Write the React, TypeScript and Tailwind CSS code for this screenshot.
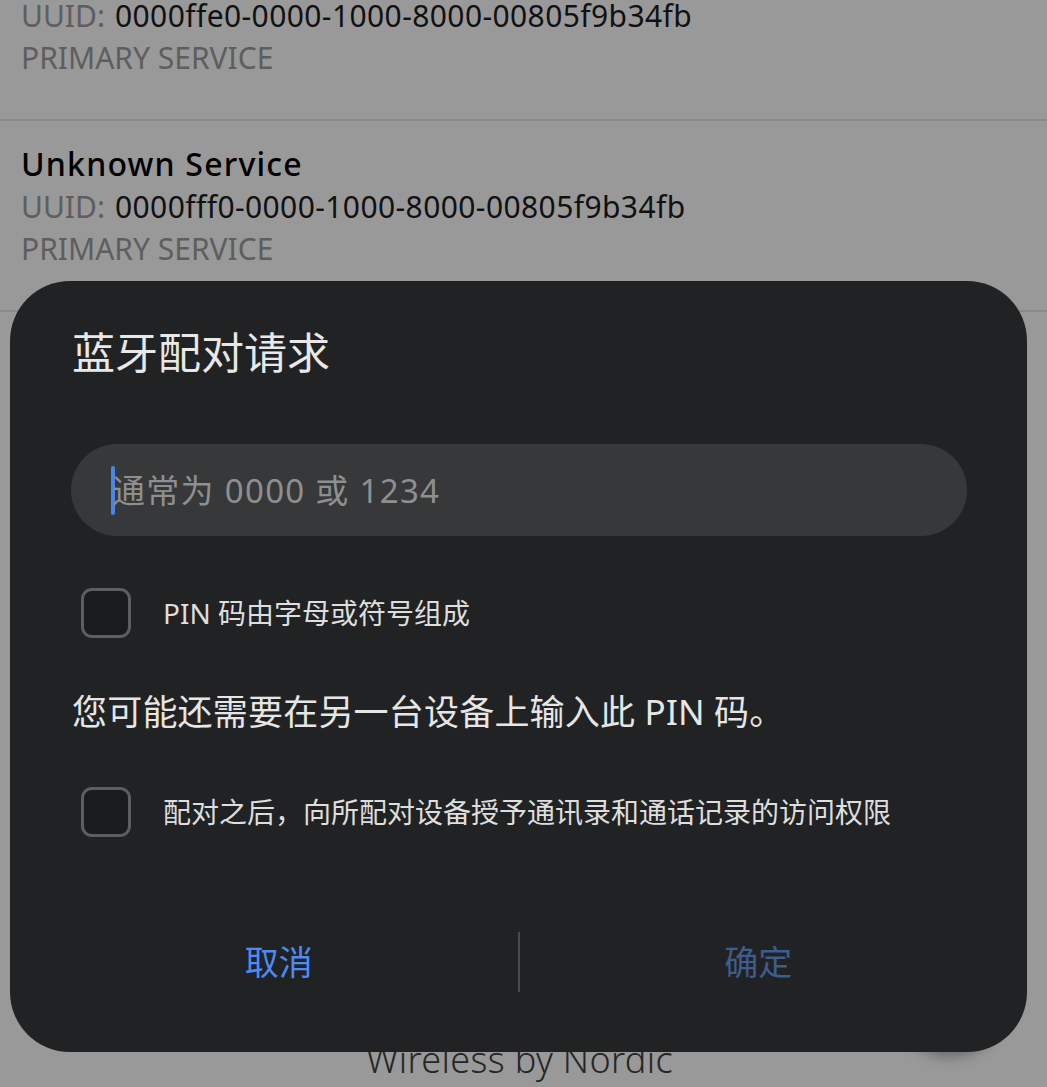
const font = { fontFamily: '"Noto Sans", "Noto Sans CJK SC", sans-serif' };

type Service = { name: string; uuid: string };

const services: Service[] = [
  { name: "Unknown Service", uuid: "0000ffe0-0000-1000-8000-00805f9b34fb" },
  { name: "Unknown Service", uuid: "0000fff0-0000-1000-8000-00805f9b34fb" },
];

const ServiceRow = ({ s }: { s: Service }) => (
  <div className="pl-[21px] pt-[21px] pb-[40px] border-b-2 border-[#8a8a8a]">
    <div className="text-[32px] leading-[44px] font-medium tracking-[1.2px] text-black">{s.name}</div>
    <div className="text-[30px] leading-[42px] flex gap-[10px]">
      <span className="text-[#5e5e5e]">UUID:</span>
      <span className="text-[#111] tracking-[0.4px]">{s.uuid}</span>
    </div>
    <div className="text-[30px] leading-[42px] text-[#5e5e5e]">PRIMARY SERVICE</div>
  </div>
);

const Check = ({ label }: { label: string }) => (
  <div className="flex items-center pl-[10px]">
    <div className="w-[50px] h-[50px] rounded-[11px] border-[3px] border-[#5d5e60] bg-[#1a1b1d] shrink-0" />
    <span className="ml-[32px] text-[28px] leading-none text-[#dedede]">{label}</span>
  </div>
);

export default function App() {
  return (
    <div className="relative w-[1047px] h-[1087px] overflow-hidden bg-[#999999]" style={font}>
      {/* page behind the scrim */}
      <div className="-mt-[70px]">
        {services.map((s) => (
          <ServiceRow key={s.uuid} s={s} />
        ))}
      </div>

      <div className="absolute left-0 right-0 top-[1042px] pr-[8px] text-center text-[36px] leading-none font-light tracking-[0.35px] text-[#262626]">
        Wireless by Nordic
      </div>

      {/* fab shadow peeking below dialog */}
      <div className="absolute left-[895px] top-[940px] w-[110px] h-[110px] rounded-full bg-[#999999] shadow-[0_6px_14px_rgba(0,0,0,0.35)]" />

      {/* dialog */}
      <div className="absolute left-[10px] top-[281px] w-[1017px] h-[771px] rounded-[60px] bg-[#212224] pt-[50px] flex flex-col">
        <div className="pl-[62px] text-[43px] leading-none text-[#e8e8e8]">蓝牙配对请求</div>

        <div className="mt-[70px] ml-[61px] mr-[60px] h-[92px] rounded-full bg-[#37383a] flex items-center pl-[40px]">
          <div className="w-[4px] h-[49px] rounded-full bg-[#4a86ea] -mr-[3px]" />
          <span className="text-[33px] leading-none tracking-[1.3px] text-[#8f8f8f]">通常为 0000 或 1234</span>
        </div>

        <div className="mt-[52px] ml-[61px]">
          <Check label="PIN 码由字母或符号组成" />
        </div>

        <div className="mt-[56px] ml-[62px] text-[35px] leading-none tracking-[0.2px] text-[#e6e6e6]">
          您可能还需要在另一台设备上输入此 PIN 码。
        </div>

        <div className="mt-[58px] ml-[61px]">
          <Check label="配对之后，向所配对设备授予通讯录和通话记录的访问权限" />
        </div>

        <div className="mt-auto mb-[36px] mx-[30px] h-[108px] flex items-center">
          <button className="flex-1 text-[34px] leading-none text-[#4e8bf2]">取消</button>
          <div className="w-[2px] h-[60px] bg-[#4a4b4d]" />
          <button className="flex-1 text-[34px] leading-none text-[#3d5d8c]">确定</button>
        </div>
      </div>
    </div>
  );
}
